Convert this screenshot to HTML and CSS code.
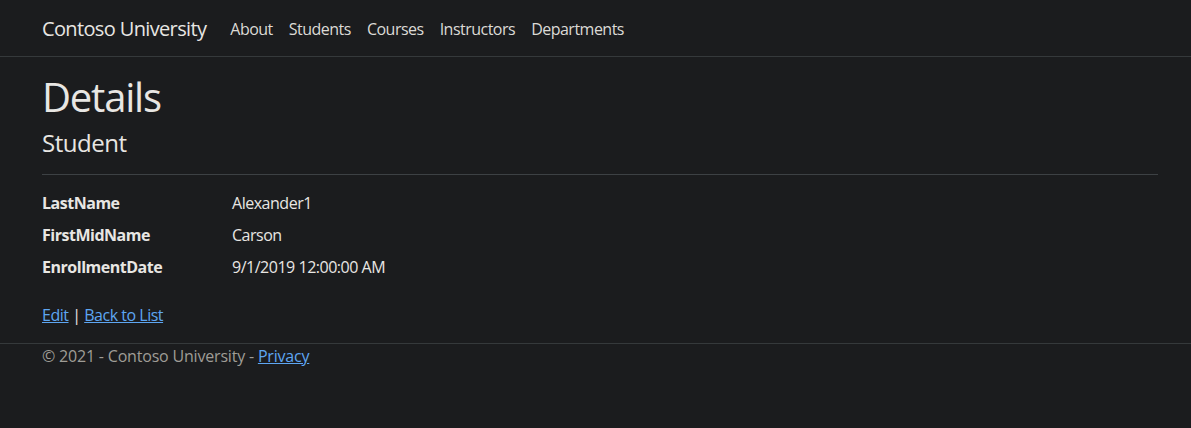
FILE: index.html
```html
<!DOCTYPE html>
<html lang="en">
<head>
<meta charset="utf-8">
<title>Details - Contoso University</title>
<link rel="stylesheet" href="styles.css">
</head>
<body>
<header class="navbar">
  <div class="wrap nav-inner">
    <a class="brand" href="#">Contoso University</a>
    <nav class="nav">
      <a class="nav-link" href="#">About</a>
      <a class="nav-link" href="#">Students</a>
      <a class="nav-link" href="#">Courses</a>
      <a class="nav-link" href="#">Instructors</a>
      <a class="nav-link" href="#">Departments</a>
    </nav>
  </div>
</header>
<main class="wrap main">
  <h1 class="title">Details</h1>
  <div>
    <h4 class="subtitle">Student</h4>
    <hr class="rule">
    <dl class="details">
      <dt>LastName</dt>
      <dd>Alexander1</dd>
      <dt>FirstMidName</dt>
      <dd>Carson</dd>
      <dt>EnrollmentDate</dt>
      <dd>9/1/2019 12:00:00 AM</dd>
    </dl>
  </div>
  <div class="actions">
    <a href="#">Edit</a> | <a href="#">Back to List</a>
  </div>
</main>
<footer class="footer">
  <div class="wrap">&copy; 2021 - Contoso University - <a href="#">Privacy</a></div>
</footer>
</body>
</html>
```

FILE: styles.css
```css
* { box-sizing: border-box; }
html, body {
  margin: 0;
  background: #1b1c1e;
}
body {
  font-family: "Open Sans", "Noto Sans", sans-serif;
  font-size: 16px;
  line-height: 1.5;
  letter-spacing: -0.03em;
  color: #e8e6e3;
}
a { color: #5ea6f2; }
.wrap {
  padding-left: 42px;
  padding-right: 33px;
}
.navbar {
  border-bottom: 1px solid #35393b;
  padding: 8px 0;
}
.nav-inner {
  display: flex;
  align-items: center;
}
.brand {
  color: #e8e6e3;
  text-decoration: none;
  font-size: 20px;
  line-height: 30px;
  padding: 6px 0 4px;
  margin-right: 16px;
  letter-spacing: -0.032em;
}
.nav {
  display: flex;
}
.nav-link {
  color: #dcdad6;
  text-decoration: none;
  padding: 9px 8px 7px;
  line-height: 24px;
  letter-spacing: -0.032em;
}
.main {
  padding-top: 16px;
  padding-bottom: 16px;
}
.title {
  font-size: 40px;
  font-weight: 400;
  line-height: 1.2;
  margin: 0 0 8px;
  letter-spacing: -0.03em;
}
.subtitle {
  font-size: 24px;
  font-weight: 400;
  line-height: 1.2;
  margin: 0 0 8px;
}
.rule {
  border: 0;
  border-top: 1px solid #3d4144;
  margin: 16px 0;
}
.details {
  display: grid;
  grid-template-columns: 190px 1fr;
  margin: 0 0 16px;
}
.details dt {
  font-weight: 700;
  margin: 0 0 8px;
}
.details dd {
  margin: 0 0 8px;
}
.footer {
  border-top: 1px solid #35393b;
  color: #9f9c96;
  line-height: 24px;
  padding-bottom: 40px;
  letter-spacing: -0.012em;
}
```
